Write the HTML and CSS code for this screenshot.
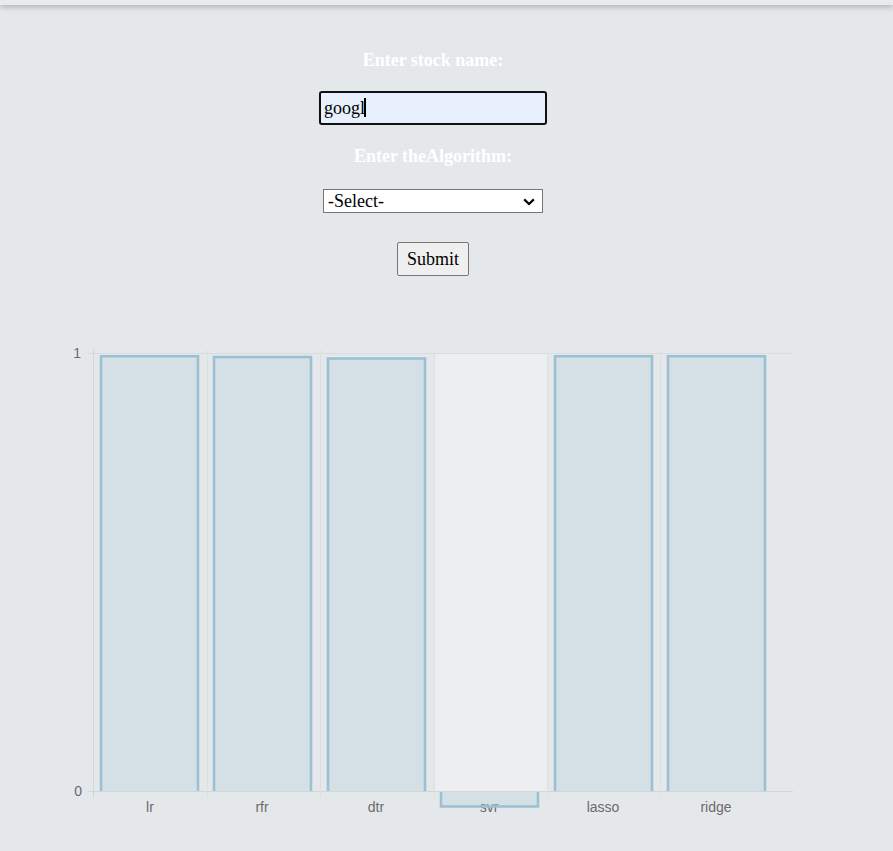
FILE: index.html
```html
<!DOCTYPE html>
<html>
<head>
<meta charset="utf-8">
<title>Stock Prediction</title>
<link rel="stylesheet" href="styles.css">
</head>
<body>
<div class="topbar"></div>
<form class="form" onsubmit="return false">
  <label class="label label-first" for="stock">Enter stock name:</label>
  <div class="input-wrap">
    <input id="stock" class="text-input" type="text" value="googl">
    <span class="caret"></span>
  </div>
  <label class="label label-second" for="algo">Enter theAlgorithm:</label>
  <div class="select-wrap">
    <select id="algo" class="select">
      <option>-Select-</option>
      <option>lr</option>
      <option>rfr</option>
      <option>dtr</option>
      <option>svr</option>
      <option>lasso</option>
      <option>ridge</option>
    </select>
    <svg class="chevron" width="12" height="8" viewBox="0 0 12 8" xmlns="http://www.w3.org/2000/svg">
      <path d="M1.2 1.4 L6 6 L10.8 1.4" fill="none" stroke="#000" stroke-width="2.2"/>
    </svg>
  </div>
  <button class="submit" type="submit">Submit</button>
</form>
<div class="chart">
  <svg class="chart-svg" width="893" height="521" viewBox="0 330 893 521" xmlns="http://www.w3.org/2000/svg">
    <rect x="435" y="353" width="113" height="438" fill="#eceeef"/>
    <g stroke="#d9dcdf" stroke-width="1">
      <line x1="88" y1="353.5" x2="793" y2="353.5"/>
      <line x1="88" y1="791.5" x2="793" y2="791.5" stroke="#d3d6d9"/>
    </g>
    <g stroke="#dcdfe2" stroke-width="1">
      <line x1="93.5" y1="350" x2="93.5" y2="798" stroke="#d3d6d9"/>
      <line x1="207.5" y1="350" x2="207.5" y2="798"/>
      <line x1="320.5" y1="350" x2="320.5" y2="798"/>
      <line x1="434.5" y1="350" x2="434.5" y2="798"/>
      <line x1="547.5" y1="350" x2="547.5" y2="798"/>
      <line x1="660.5" y1="350" x2="660.5" y2="798"/>
    </g>
    <g class="axis-text" fill="#6b6b6b" font-family="Liberation Sans, Arial, sans-serif" font-size="14">
      <text x="81" y="358" text-anchor="end">1</text>
      <text x="82" y="796" text-anchor="end">0</text>
      <text x="150" y="812" text-anchor="middle">lr</text>
      <text x="262" y="812" text-anchor="middle">rfr</text>
      <text x="376" y="812" text-anchor="middle">dtr</text>
      <text x="489" y="812" text-anchor="middle">svr</text>
      <text x="603" y="812" text-anchor="middle">lasso</text>
      <text x="716" y="812" text-anchor="middle">ridge</text>
    </g>
    <g fill="rgba(169,196,215,0.26)" stroke="#9cc0d3" stroke-width="2.6">
      <rect x="101" y="356" width="97" height="435" stroke="none"/>
      <path d="M101 791 V356.3 H198 V791" fill="none"/>
      <rect x="214" y="357" width="97" height="434" stroke="none"/>
      <path d="M214 791 V357 H311 V791" fill="none"/>
      <rect x="328" y="358" width="97" height="433" stroke="none"/>
      <path d="M328 791 V358.5 H425 V791" fill="none"/>
      <rect x="441" y="792" width="97" height="14" stroke="none"/>
      <path d="M441 792 V806.5 H538 V792" fill="none"/>
      <rect x="555" y="356" width="97" height="435" stroke="none"/>
      <path d="M555 791 V356.3 H652 V791" fill="none"/>
      <rect x="668" y="356" width="97" height="435" stroke="none"/>
      <path d="M668 791 V356.3 H765 V791" fill="none"/>
    </g>
  </svg>
</div>
</body>
</html>
```

FILE: styles.css
```css
html, body {
  margin: 0;
  padding: 0;
}

body {
  background: #e5e8eb;
  font-family: "Liberation Serif", "Times New Roman", serif;
  width: 893px;
  height: 851px;
  overflow: hidden;
}

.topbar {
  height: 5px;
  background: #e9eaec;
  box-shadow: 0 1px 6px rgba(0, 0, 0, 0.35);
  position: relative;
}

.form {
  width: 866px;
  display: flex;
  flex-direction: column;
  align-items: center;
}

.label {
  display: block;
  color: #ffffff;
  font-weight: bold;
  font-size: 18px;
  line-height: 20px;
  height: 20px;
}

.label-first {
  margin-top: 45px;
}

.label-second {
  margin-top: 21px;
}

.input-wrap {
  margin-top: 21px;
  position: relative;
  width: 228px;
  height: 34px;
}

.text-input {
  box-sizing: border-box;
  width: 228px;
  height: 34px;
  margin: 0;
  padding: 0 3px;
  border: 2px solid #101010;
  border-radius: 3px;
  background: #e8f0fe;
  font-family: "Liberation Serif", "Times New Roman", serif;
  font-size: 18px;
  color: #000;
  outline: none;
}

.caret {
  position: absolute;
  left: 45px;
  top: 7px;
  width: 2px;
  height: 19px;
  background: #000;
}

.select-wrap {
  margin-top: 23px;
  position: relative;
  width: 220px;
  height: 24px;
}

.select {
  box-sizing: border-box;
  width: 220px;
  height: 24px;
  margin: 0;
  border: 1px solid #767676;
  border-radius: 0;
  background-color: #fff;
  font-family: "Liberation Serif", "Times New Roman", serif;
  font-size: 18px;
  color: #000;
  padding: 0 0 0 4px;
  appearance: none;
  -webkit-appearance: none;
}

.chevron {
  position: absolute;
  right: 8px;
  top: 9px;
  pointer-events: none;
}

.submit {
  margin-top: 29px;
  box-sizing: border-box;
  width: 72px;
  height: 34px;
  border: 1px solid #767676;
  border-radius: 2px;
  background: #efefef;
  font-family: "Liberation Serif", "Times New Roman", serif;
  font-size: 18px;
  color: #000;
  padding: 0;
}

.chart {
  margin-top: 54px;
  height: 521px;
}

.chart-svg {
  display: block;
}
```
